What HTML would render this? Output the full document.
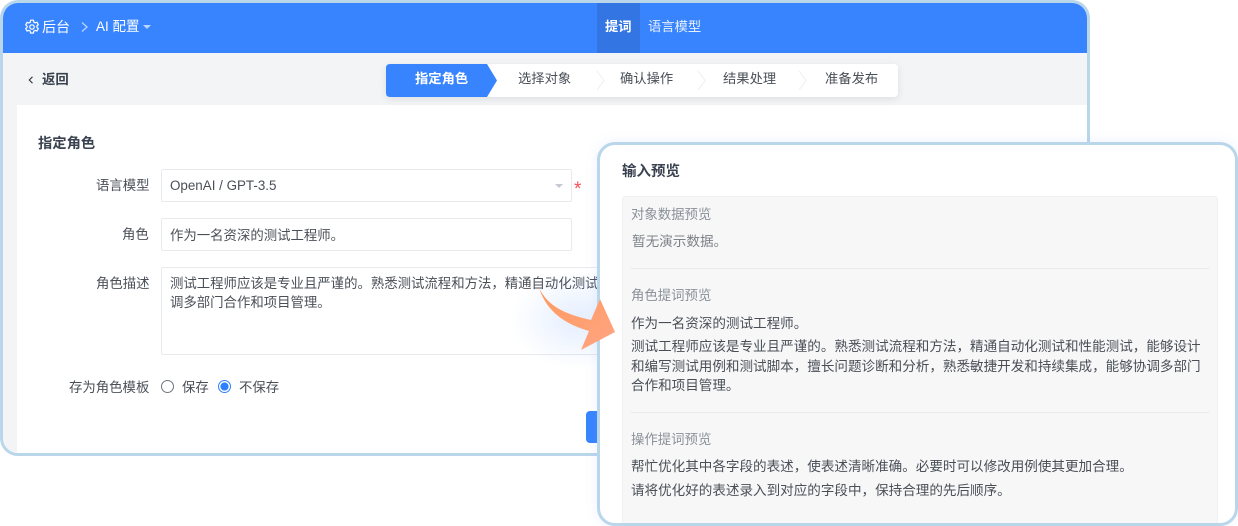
<!DOCTYPE html>
<html lang="zh"><head><meta charset="utf-8"><title>AI 配置</title>
<style>
*{box-sizing:border-box}
html,body{margin:0;padding:0;width:1238px;height:526px;overflow:hidden;background:#fff}
body{position:relative;font-family:"Liberation Sans","Noto Sans CJK SC",sans-serif;font-size:13.4px;color:#4a4f57}
.a{position:absolute;white-space:nowrap;line-height:20px}
.box{position:absolute;border:1px solid #e8eaed;border-radius:2px;background:#fff}
.b{font-weight:700}
</style></head><body>

<div class="a" style="left:0;top:0;width:1090px;height:456px;border:3px solid #b9d6ea;border-radius:18px;overflow:hidden;background:#fff">
  <div style="position:absolute;left:0;top:0;width:1084px;height:50px;background:#3884ff"></div>
  <div style="position:absolute;left:594px;top:0;width:43px;height:50px;background:#3275e3"></div>
  <div style="position:absolute;left:0;top:50px;width:1084px;height:52px;background:#f3f4f6"></div>
  <div style="position:absolute;left:0;top:102px;width:14px;height:350px;background:#f3f4f6"></div>
</div>

<svg class="a" style="left:24px;top:19px" width="16" height="16" viewBox="0 0 16 16" fill="none" stroke="#fff" stroke-width="1.2"><path d="M6.6 1.2h2.8l.4 1.9 1.3.7 1.8-.6 1.4 2.4-1.4 1.3v1.4l1.4 1.3-1.4 2.4-1.8-.6-1.3.7-.4 1.9H6.6l-.4-1.9-1.3-.7-1.8.6-1.4-2.4 1.4-1.3V7.1L1.700 5.800l1.400-2.400 1.800.6 1.300-.7z"/><circle cx="8" cy="8" r="2.200"/></svg>
<div class="a" style="left:42px;top:17px;color:#fff;font-size:14px">后台</div>
<svg class="a" style="left:80px;top:21px" width="9" height="12" viewBox="0 0 9 12" fill="none" stroke="#b9d3ff" stroke-width="1.300"><path d="M2 1.500 7 6 2 10.500"/></svg>
<div class="a" style="left:96px;top:17px;color:#fff;font-size:13.500px">AI 配置</div>
<svg class="a" style="left:143px;top:25px" width="8" height="4"><path d="M0 0h8L4 4z" fill="#bcd5ff"/></svg>
<div class="a b" style="left:605px;top:17px;color:#fff;font-size:13.300px">提词</div>
<div class="a" style="left:648px;top:17px;color:#e6efff;font-size:13.300px">语言模型</div>

<svg class="a" style="left:28px;top:76px" width="6" height="8" viewBox="0 0 6 8" fill="none" stroke="#3a4250" stroke-width="1.200"><path d="M4.500 .8 1.300 4l3.200 3.200"/></svg>
<div class="a b" style="left:42px;top:70px;color:#3a4250;font-size:13.400px">返回</div>

<div class="a" style="left:386px;top:64px;width:512px;height:33px;background:#fff;border-radius:4px;box-shadow:0 2px 8px rgba(30,40,60,.1)"></div>
<svg class="a" style="left:386px;top:64px" width="512" height="33">
  <path d="M4 0H101L111 16.500 101 33H4Q0 33 0 29V4Q0 0 4 0z" fill="#3884ff"/>
  <g fill="none" stroke="#eceef1" stroke-width="1"><path d="M211 7 218 16.500 211 26"/><path d="M312 7 319 16.500 312 26"/><path d="M413 7 420 16.500 413 26"/></g>
</svg>
<div class="a b" style="left:415px;top:69px;color:#fff;font-size:13.300px">指定角色</div>
<div class="a" style="left:518px;top:69px;font-size:13.300px">选择对象</div>
<div class="a" style="left:620px;top:69px;font-size:13.300px">确认操作</div>
<div class="a" style="left:723px;top:69px;font-size:13.300px">结果处理</div>
<div class="a" style="left:825px;top:69px;font-size:13.300px">准备发布</div>

<div class="a b" style="left:38px;top:134px;color:#3a4250;font-size:14.300px">指定角色</div>

<div class="a" style="left:96px;top:176px">语言模型</div>
<div class="box" style="left:161px;top:169px;width:411px;height:33px"></div>
<div class="a" style="left:170px;top:176px;font-size:13.400px">OpenAI / GPT-3.5</div>
<svg class="a" style="left:555px;top:184px" width="8" height="4"><path d="M0 0h8L4 4z" fill="#c5cad2"/></svg>
<div class="a" style="left:574px;top:180px;color:#f4505a;font-size:19px">*</div>

<div class="a" style="left:122px;top:225px">角色</div>
<div class="box" style="left:161px;top:218px;width:411px;height:33px"></div>
<div class="a" style="left:170px;top:226px">作为一名资深的测试工程师。</div>

<div class="a" style="left:96px;top:274px">角色描述</div>
<div class="box" style="left:161px;top:267px;width:445px;height:88px"></div>
<div class="a" style="left:170px;top:274px">测试工程师应该是专业且严谨的。熟悉测试流程和方法，精通自动化测试</div>
<div class="a" style="left:170px;top:293px">调多部门合作和项目管理。</div>

<div class="a" style="left:69px;top:378px">存为角色模板</div>
<div class="a" style="left:161px;top:380px;width:13px;height:13px;border:1px solid #70757d;border-radius:50%"></div>
<div class="a" style="left:182px;top:378px">保存</div>
<div class="a" style="left:218px;top:380px;width:13px;height:13px;border:1px solid #2f80ff;border-radius:50%;background:radial-gradient(circle,#2f80ff 0 3.800px,#fff 4.300px)"></div>
<div class="a" style="left:239px;top:378px">不保存</div>
<div class="a" style="left:586px;top:411px;width:20px;height:32px;background:#3884ff;border-radius:4px"></div>

<div class="a" style="left:510px;top:270px;width:140px;height:100px;background:radial-gradient(ellipse at center,rgba(120,170,255,.2),rgba(120,170,255,0) 70%)"></div>

<div class="a" style="left:597px;top:142px;width:641px;height:384px;background:#fff;border:3px solid #b9d6ea;border-radius:18px;overflow:hidden;box-shadow:0 0 12px rgba(120,170,255,.15)">
  <div style="position:absolute;left:22px;top:51px;width:596px;height:340px;background:#f7f7f8;border:1px solid #f0f1f3;border-radius:3px"></div>
  <div style="position:absolute;left:31px;top:123px;width:578px;height:1px;background:#e9eaec"></div>
  <div style="position:absolute;left:31px;top:267px;width:578px;height:1px;background:#e9eaec"></div>
</div>

<div class="a b" style="left:622px;top:162px;color:#3a4250;font-size:14.500px">输入预览</div>
<div class="a" style="left:631px;top:205px;color:#8b9099">对象数据预览</div>
<div class="a" style="left:632px;top:232px;color:#7d8288;font-size:13.600px">暂无演示数据。</div>
<div class="a" style="left:631px;top:286px;color:#8b9099">角色提词预览</div>
<div class="a" style="left:631px;top:314px;font-size:13.570px">作为一名资深的测试工程师。</div>
<div class="a" style="left:631px;top:337px;font-size:13.570px">测试工程师应该是专业且严谨的。熟悉测试流程和方法，精通自动化测试和性能测试，能够设计</div>
<div class="a" style="left:631px;top:357px;font-size:13.570px">和编写测试用例和测试脚本，擅长问题诊断和分析，熟悉敏捷开发和持续集成，能够协调多部门</div>
<div class="a" style="left:631px;top:376px;font-size:13.570px">合作和项目管理。</div>
<div class="a" style="left:631px;top:430px;color:#8b9099">操作提词预览</div>
<div class="a" style="left:631px;top:457px;font-size:13.570px">帮忙优化其中各字段的表述，使表述清晰准确。必要时可以修改用例使其更加合理。</div>
<div class="a" style="left:631px;top:481px;font-size:13.570px">请将优化好的表述录入到对应的字段中，保持合理的先后顺序。</div>

<svg class="a" style="left:535px;top:285px" width="85" height="70" viewBox="0 0 85 70"><defs><linearGradient id="g" x1="0" y1="0" x2="1" y2="1"><stop offset="0" stop-color="#ff9a5c"/><stop offset="1" stop-color="#ffa584"/></linearGradient></defs><path d="M4 3C13 21 29 29 56 35L65 14 80 47 46 65 54 46C30 39 12 27 4 3z" fill="url(#g)"/></svg>

</body></html>
